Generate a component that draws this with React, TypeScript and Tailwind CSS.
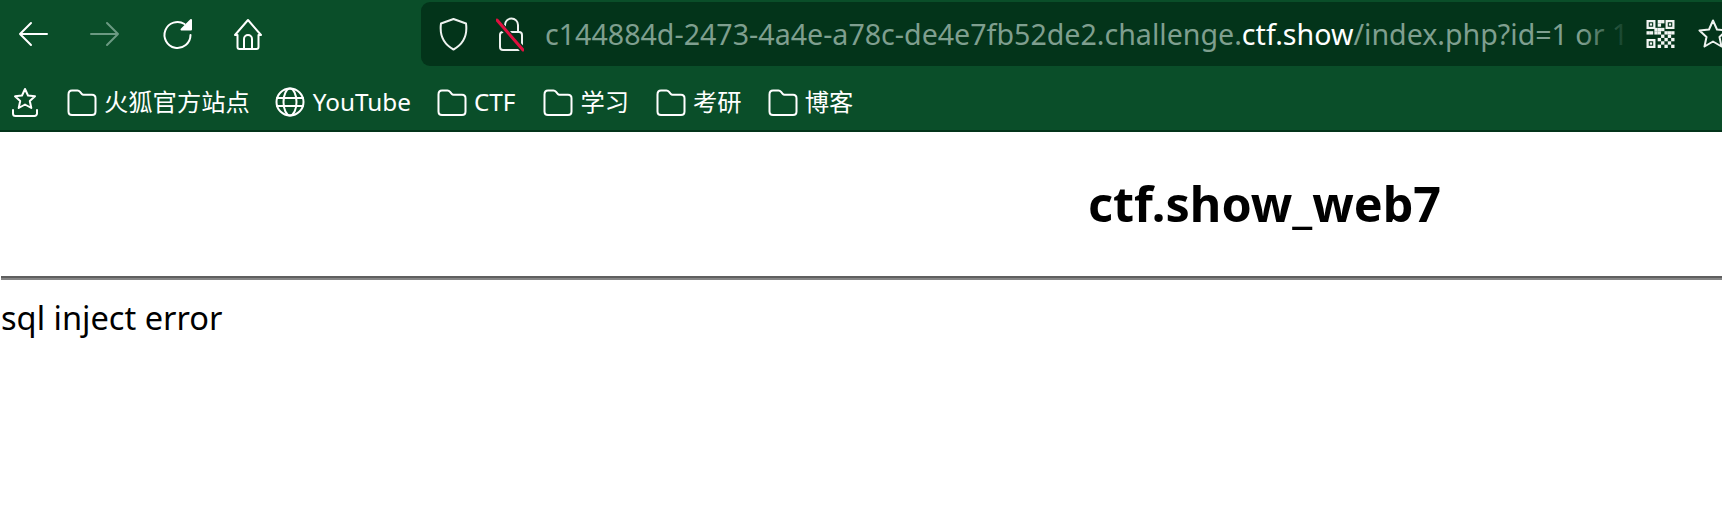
const ui = { fontFamily: '"Noto Sans", "Noto Sans CJK SC", sans-serif' };

function Stroke({ w, h, vw, vh, children, className }: { w: number; h: number; vw: number; vh: number; children: React.ReactNode; className?: string }) {
  return (
    <svg width={w} height={h} viewBox={`0 0 ${vw} ${vh}`} fill="none" stroke="currentColor" strokeWidth={2} strokeLinecap="round" strokeLinejoin="round" className={className}>
      {children}
    </svg>
  );
}

function Folder({ className }: { className?: string }) {
  return (
    <Stroke w={30} h={27} vw={30} vh={27} className={className}>
      <path d="M1.5 5.5C1.5 3 3 1.5 5 1.5h5.5c1.2 0 1.8.5 2.6 1.4l1.6 2c.5.6 1 .8 1.800.8H25c2 0 3.500 1.300 3.500 3.500v13.300c0 2-1.400 3.500-3.500 3.500H5c-2 0-3.500-1.500-3.500-3.500z" />
    </Stroke>
  );
}

function Bookmark({ label, className }: { label: string; className?: string }) {
  return (
    <div className={`flex items-center gap-[7px] ${className ?? ""}`}>
      <Folder />
      <span className="text-[24.3px] leading-none text-white whitespace-nowrap">{label}</span>
    </div>
  );
}

function QrCode() {
  const cells = [
    [10, 0], [13, 0], [10, 3], [13, 7], [10, 7], [7, 10], [10, 10], [16, 10], [19, 10], [22, 10], [0, 10], [3, 10],
    [13, 13], [19, 13], [10, 16], [16, 16], [22, 16], [13, 19], [19, 19], [10, 22], [16, 22], [22, 22], [7, 7],
  ];
  return (
    <svg width="29" height="28" viewBox="0 0 25 25" className="shrink-0 text-[#f2f5f3]" fill="currentColor">
      <path fillRule="evenodd" d="M0 0h8v8H0zM2 2v4h4V2zM17 0h8v8h-8zM19 2v4h4V2zM0 17h8v8H0zM2 19v4h4v-4z" />
      <rect x="3" y="3" width="2" height="2" />
      <rect x="20" y="3" width="2" height="2" />
      <rect x="3" y="20" width="2" height="2" />
      {cells.map(([x, y]) => (
        <rect key={`${x}-${y}`} x={x} y={y} width="3" height="3" />
      ))}
    </svg>
  );
}

export default function App() {
  return (
    <div className="h-[527px] w-[1722px] overflow-hidden bg-white" style={ui}>
      <header className="h-[132px] bg-[#0a4e29] border-b-2 border-[#03341a]">
        <div className="flex h-[68px] items-start pt-[2px]">
          <nav className="flex h-[64px] w-[421px] shrink-0 items-center pl-[18px] text-white">
            <Stroke w={30} h={26} vw={30} vh={26}>
              <path d="M29 13H2M13 2 2 13l11 11" />
            </Stroke>
            <Stroke w={30} h={26} vw={30} vh={26} className="ml-[42px] text-[#6b9a82]">
              <path d="M1 13h27M17 2l11 11-11 11" />
            </Stroke>
            <Stroke w={31} h={31} vw={31} vh={31} className="ml-[42px]">
              <path d="M28.500 16A13 13 0 1 1 22.500 5" />
              <path d="M19.500 10.500h9.500V1z" fill="currentColor" />
            </Stroke>
            <Stroke w={32} h={33} vw={32} vh={33} className="ml-[39px]">
              <path d="M3 17 16 2l13 15-2.500 0V29a2 2 0 0 1-2 2H7.500a2 2 0 0 1-2-2V17z" />
              <path d="M12 31V21a4 4 0 0 1 8 0v10" />
            </Stroke>
          </nav>
          <div className="relative flex h-[64px] flex-1 items-center overflow-hidden rounded-l-[9px] bg-[#03341a]">
            <Stroke w={31} h={34} vw={31} vh={34} className="ml-[17px] shrink-0 text-[#eef2ef]">
              <path d="M15.500 2 28 6.500c1.500 11-1.500 20-12.500 26C4.500 26.500 1.500 17.500 3 6.500z" />
            </Stroke>
            <svg width="28" height="36" viewBox="0 0 28 36" fill="none" strokeWidth="2" strokeLinecap="round" className="ml-[27px] shrink-0">
              <path d="M9 15V9a6.500 6.500 0 0 1 13 0v6" stroke="#eef2ef" />
              <rect x="4" y="16" width="22" height="18" rx="3" stroke="#eef2ef" />
              <path d="M1 5 27 34" stroke="#03341a" strokeWidth="6" />
              <path d="M1 4 27 34" stroke="#e0103f" strokeWidth="3" />
            </svg>
            <div className="ml-[21px] w-[1083px] shrink-0 overflow-hidden whitespace-nowrap text-[28.6px] leading-[64px] text-[#7f9f8f]">
              c144884d-2473-4a4e-a78c-de4e7fb52de2.challenge.<span className="text-white">ctf.show</span>/index.php?id=1 or 1=1
            </div>
            <div className="absolute left-[1160px] top-0 h-full w-[50px] bg-gradient-to-r from-transparent to-[#03341a]" />
            <div className="ml-[18px] shrink-0">
              <QrCode />
            </div>
            <Stroke w={32} h={32} vw={32} vh={32} className="ml-[22px] shrink-0 text-[#eef2ef]">
              <path d="M16 2.500l4 9 9.500 1-7 6.500 2 9.500-8.500-5-8.500 5 2-9.500-7-6.500 9.500-1z" />
            </Stroke>
          </div>
        </div>
        <div className="flex h-[62px] items-center pl-[11px] pt-[6px] text-white">
          <Stroke w={28} h={31} vw={28} vh={31}>
            <path d="M14 2l3 6.500 7 .8-5.200 4.700 1.500 7L14 17.500 7.700 21l1.500-7L4 9.300l7-.8z" />
            <path d="M2 23v3.500a2.500 2.500 0 0 0 2.500 2.500h19a2.500 2.500 0 0 0 2.500-2.500V23" />
          </Stroke>
          <Bookmark label="火狐官方站点" className="ml-[28px]" />
          <div className="ml-[25px] flex items-center gap-[8px]">
            <Stroke w={30} h={30} vw={30} vh={30}>
              <circle cx="15" cy="15" r="13.500" />
              <ellipse cx="15" cy="15" rx="6.500" ry="13.500" />
              <path d="M2 11h26M2 19h26" />
            </Stroke>
            <span className="text-[24.3px] leading-none whitespace-nowrap">YouTube</span>
          </div>
          <Bookmark label="CTF" className="ml-[26px]" />
          <Bookmark label="学习" className="ml-[28px]" />
          <Bookmark label="考研" className="ml-[27px]" />
          <Bookmark label="博客" className="ml-[26px]" />
        </div>
      </header>
      <main className="text-black">
        <h1 className="pl-[1088px] pt-[39px] text-[48.500px] font-bold leading-[64px] whitespace-nowrap">ctf.show_web7</h1>
        <hr className="ml-px mt-[41px] h-[4px] border-0 border-t-2 border-b-2 border-t-[#5f5f5f] border-b-[#858585]" />
        <p className="pl-px pt-[16px] text-[32.600px] leading-[44px]">sql inject error</p>
      </main>
    </div>
  );
}
